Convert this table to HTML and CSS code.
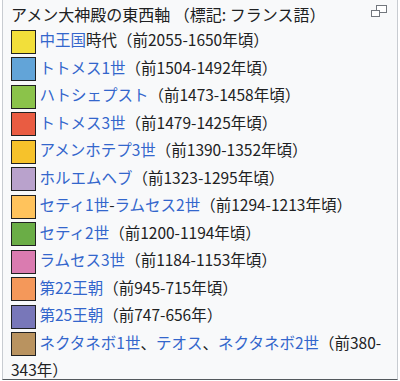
FILE: index.html
```html
<!DOCTYPE html>
<html lang="ja">
<head>
<meta charset="utf-8">
<link rel="stylesheet" href="styles.css">
</head>
<body>
<div class="legend-box">
  <div class="title">
    <span class="title-text">アメン大神殿の東西軸 （標記: フランス語）</span>
    <svg class="expand" width="17" height="13" viewBox="0 0 17 13">
      <rect x="5.5" y="0.5" width="10" height="7" fill="#fff" stroke="#72777d"/>
      <rect x="0.5" y="5.5" width="8" height="6" fill="#fff" stroke="#72777d"/>
    </svg>
  </div>
  <div class="row"><span class="sw c1"></span>&nbsp;<a>中王国</a>時代（前2055-1650年頃）</div>
  <div class="row"><span class="sw c2"></span>&nbsp;<a>トトメス1世</a>（前1504-1492年頃）</div>
  <div class="row"><span class="sw c3"></span>&nbsp;<a>ハトシェプスト</a>（前1473-1458年頃）</div>
  <div class="row"><span class="sw c4"></span>&nbsp;<a>トトメス3世</a>（前1479-1425年頃）</div>
  <div class="row"><span class="sw c5"></span>&nbsp;<a>アメンホテプ3世</a>（前1390-1352年頃）</div>
  <div class="row"><span class="sw c6"></span>&nbsp;<a>ホルエムヘブ</a>（前1323-1295年頃）</div>
  <div class="row"><span class="sw c7"></span>&nbsp;<a>セティ1世</a>-<a>ラムセス2世</a>（前1294-1213年頃）</div>
  <div class="row"><span class="sw c8"></span>&nbsp;<a>セティ2世</a>（前1200-1194年頃）</div>
  <div class="row"><span class="sw c9"></span>&nbsp;<a>ラムセス3世</a>（前1184-1153年頃）</div>
  <div class="row"><span class="sw c10"></span>&nbsp;<a>第22王朝</a>（前945-715年頃）</div>
  <div class="row"><span class="sw c11"></span>&nbsp;<a>第25王朝</a>（前747-656年）</div>
  <div class="row"><span class="sw c12"></span>&nbsp;<a>ネクタネボ1世</a>、<a>テオス</a>、<a>ネクタネボ2世</a><span>（前380-</span><span>343年）</span></div>
</div>
</body>
</html>
```
FILE: styles.css
```css
html, body {
  margin: 0;
  padding: 0;
  background: #ffffff;
}

body {
  font-family: "Noto Sans CJK JP", "Noto Sans", sans-serif;
  color: #202122;
}

.legend-box {
  margin: -1px 2px 0 2px;
  height: 381px;
  box-sizing: border-box;
  border: 1px solid #c8ccd1;
  border-bottom-color: #54595d;
  background: #f8f9fa;
  padding: 2px 8px 0 8px;
}

.title {
  display: flex;
  justify-content: space-between;
  align-items: flex-start;
  height: 26px;
}

.title-text {
  font-size: 16px;
  line-height: 25px;
  white-space: nowrap;
}

.expand {
  margin-top: 3px;
  margin-right: 1px;
  flex: none;
}

.row {
  font-size: 15.5px;
  line-height: 23px;
}

.row a {
  color: #3366cc;
  text-decoration: none;
}

.sw {
  display: inline-block;
  box-sizing: border-box;
  width: 25px;
  height: 24px;
  margin: 1.75px 0;
  border: 1px solid #202122;
  vertical-align: top;
}

.c1 { background: #f2df3a; }
.c2 { background: #62a4d8; }
.c3 { background: #8bc34a; }
.c4 { background: #e95c42; }
.c5 { background: #f6c22b; }
.c6 { background: #b9a2cc; }
.c7 { background: #ffc35c; }
.c8 { background: #6aad46; }
.c9 { background: #da7bb0; }
.c10 { background: #f4985a; }
.c11 { background: #7877b9; }
.c12 { background: #b99360; }
```
